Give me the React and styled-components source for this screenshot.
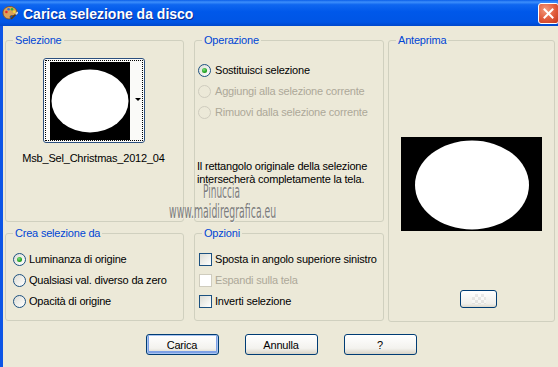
import React from "react";
import styled, { createGlobalStyle } from "styled-components";

const GlobalStyle = createGlobalStyle`
  html, body {
    margin: 0;
    padding: 0;
    background: #ece9d8;
  }
  body {
    width: 558px;
    height: 367px;
    overflow: hidden;
    font-family: "Liberation Sans", Arial, sans-serif;
    font-size: 11px;
    letter-spacing: -0.2px;
    color: #000;
  }
`;

function PaletteIcon() {
  return (
    <svg width="16" height="16" viewBox="0 0 16 16">
      <path d="M8 1.5C3.8 1.5 1 4.3 1 7.8c0 3.4 2.7 6.2 6 6.2 1.3 0 1.6-.8 1.2-1.6-.4-.9.2-1.8 1.2-1.8h1.6c2.2 0 3.9-1.5 3.9-3.6C14.9 4 11.9 1.5 8 1.5z" fill="#d9a25b" stroke="#7a4b1c" strokeWidth="0.8" />
      <circle cx="4.4" cy="7" r="1.3" fill="#e52b2b" />
      <circle cx="6.6" cy="4.2" r="1.3" fill="#2b6ee5" />
      <circle cx="10" cy="4.2" r="1.3" fill="#2fb32f" />
      <circle cx="12.2" cy="6.8" r="1.2" fill="#f5e03a" />
      <path d="M9.5 13.5 L14.8 8.2" stroke="#5a3a16" strokeWidth="1.6" strokeLinecap="round" />
      <path d="M14.2 8.8 L15.4 7.6" stroke="#dcdcdc" strokeWidth="1.8" strokeLinecap="round" />
    </svg>
  );
}

function ThumbImage() {
  return (
    <svg width="80" height="78" viewBox="0 0 80 78">
      <rect width="80" height="78" fill="#000" />
      <ellipse cx="40" cy="39" rx="38.5" ry="31.5" fill="#fff" />
    </svg>
  );
}

function PreviewImage() {
  return (
    <svg width="141" height="94" viewBox="0 0 141 94">
      <rect width="141" height="94" fill="#000" />
      <ellipse cx="71" cy="48" rx="57" ry="44.5" fill="#fff" />
    </svg>
  );
}

export default function App() {
  return (
    <Window>
      <GlobalStyle />
      <TitleBar>
        <PaletteIcon />
        <Title>Carica selezione da disco</Title>
        <CloseButton>
          <svg width="11" height="11" viewBox="0 0 11 11">
            <path d="M1.5 1.5 L9.5 9.5 M9.5 1.5 L1.5 9.5" stroke="#fff" strokeWidth="2" strokeLinecap="square" />
          </svg>
        </CloseButton>
      </TitleBar>

      <Body>
        <Panels>
          <LeftGrid>
            <Group>
              <Legend>Selezione</Legend>
              <SelectionContent>
                <Thumb>
                  <FocusRing>
                    <ThumbImage />
                    <DropArea>
                      <DropArrow />
                    </DropArea>
                  </FocusRing>
                </Thumb>
                <FileName>Msb_Sel_Christmas_2012_04</FileName>
              </SelectionContent>
            </Group>

            <Group>
              <Legend>Operazione</Legend>
              <OptionList $pad="17px 0 0 3px">
                <Option>
                  <Radio $checked />
                  <span>Sostituisci selezione</span>
                </Option>
                <Option $disabled>
                  <Radio $disabled />
                  <span>Aggiungi alla selezione corrente</span>
                </Option>
                <Option $disabled>
                  <Radio $disabled />
                  <span>Rimuovi dalla selezione corrente</span>
                </Option>
              </OptionList>
              <Note>
                Il rettangolo originale della selezione
                <br />
                intersecherà completamente la tela.
              </Note>
            </Group>

            <Group>
              <Legend>Crea selezione da</Legend>
              <OptionList $pad="13px 0 0 7px">
                <Option $gap="3px">
                  <Radio $checked />
                  <span>Luminanza di origine</span>
                </Option>
                <Option $gap="3px">
                  <Radio />
                  <span>Qualsiasi val. diverso da zero</span>
                </Option>
                <Option $gap="3px">
                  <Radio />
                  <span>Opacità di origine</span>
                </Option>
              </OptionList>
            </Group>

            <Group>
              <Legend>Opzioni</Legend>
              <OptionList $pad="13px 0 0 4px">
                <Option $gap="3px">
                  <Check />
                  <span>Sposta in angolo superiore sinistro</span>
                </Option>
                <Option $gap="3px" $disabled>
                  <Check $disabled />
                  <span>Espandi sulla tela</span>
                </Option>
                <Option $gap="3px">
                  <Check />
                  <span>Inverti selezione</span>
                </Option>
              </OptionList>
            </Group>
          </LeftGrid>

          <PreviewGroup>
            <Legend>Anteprima</Legend>
            <PreviewContent>
              <PreviewImage />
              <SmallButton>
                <Checker />
              </SmallButton>
            </PreviewContent>
          </PreviewGroup>
        </Panels>

        <ButtonRow>
          <Button $default>Carica</Button>
          <Button>Annulla</Button>
          <Button>?</Button>
        </ButtonRow>

        <Watermark $x="200px" $y="155px" $size="20px" $scale={0.5}>
          Pinuccia
        </Watermark>
        <Watermark $x="166px" $y="175px" $size="20px" $scale={0.52}>
          www.maidiregrafica.eu
        </Watermark>
      </Body>
    </Window>
  );
}

const Window = styled.div`
  width: 558px;
  height: 367px;
  display: flex;
  flex-direction: column;
  overflow: hidden;
`;

const TitleBar = styled.div`
  height: 26px;
  flex: none;
  display: flex;
  align-items: center;
  gap: 5px;
  padding-left: 2px;
  background: linear-gradient(
    #0a5ee8 0%,
    #3d8ffb 8%,
    #0f67f0 18%,
    #0058ea 45%,
    #0055e5 85%,
    #0048cc 100%
  );
  overflow: hidden;
`;

const Title = styled.span`
  color: #fff;
  font-family: "Liberation Sans", Arial, sans-serif;
  font-size: 14px;
  font-weight: bold;
  letter-spacing: 0;
  text-shadow: 1px 1px #0b2a8f;
  margin-top: 1px;
`;

const CloseButton = styled.div`
  margin-left: auto;
  margin-right: -1px;
  width: 21px;
  height: 21px;
  box-sizing: border-box;
  border: 1px solid #fff;
  border-radius: 3px;
  background: radial-gradient(circle at 35% 30%, #f39a7c, #e0593a 55%, #c2381d);
  display: flex;
  align-items: center;
  justify-content: center;
`;

const Body = styled.div`
  position: relative;
  flex: 1;
  background: #ece9d8;
  border-left: 3px solid #0d55e6;
  padding: 8px 0 0 2px;
  display: flex;
  flex-direction: column;
`;

const Panels = styled.div`
  display: flex;
  gap: 4px;
`;

const LeftGrid = styled.div`
  display: grid;
  grid-template-columns: 179px 190px;
  grid-template-rows: 188px 94px;
  column-gap: 10px;
  row-gap: 5px;
`;

const Group = styled.fieldset`
  margin: 0;
  padding: 0;
  min-width: 0;
  box-sizing: border-box;
  border: 1px solid #d0d0bf;
  border-radius: 3px;
`;

const PreviewGroup = styled(Group)`
  width: 167px;
  height: 288px;
`;

const Legend = styled.legend`
  margin-left: 7px;
  padding: 0 2px;
  color: #0046d5;
  font-size: 11px;
  line-height: 13px;
`;

const SelectionContent = styled.div`
  display: flex;
  flex-direction: column;
  align-items: center;
  padding: 11px 2px 0 0;
`;

const Thumb = styled.div`
  width: 102px;
  height: 85px;
  box-sizing: border-box;
  border: 1px solid #2b4f7e;
  border-radius: 3px;
  padding: 1px;
  background: #fafaf8;
`;

const FocusRing = styled.div`
  height: 100%;
  box-sizing: border-box;
  border: 1px dotted #000;
  display: flex;
  align-items: center;
  padding-left: 4px;
`;

const DropArea = styled.div`
  flex: 1;
  align-self: stretch;
  display: flex;
  align-items: center;
  justify-content: flex-end;
  padding-right: 1px;
  padding-bottom: 2px;
`;

const DropArrow = styled.span`
  width: 0;
  height: 0;
  border-left: 3px solid transparent;
  border-right: 3px solid transparent;
  border-top: 3px solid #000;
`;

const FileName = styled.div`
  margin-top: 9px;
  line-height: 13px;
`;

const OptionList = styled.div`
  display: flex;
  flex-direction: column;
  gap: 8px;
  padding: ${(p) => p.$pad};
`;

const Option = styled.div`
  display: flex;
  align-items: center;
  gap: ${(p) => p.$gap || "4px"};
  height: 13px;
  line-height: 13px;
  color: ${(p) => (p.$disabled ? "#aca899" : "#000")};
  white-space: nowrap;
`;

const Radio = styled.span`
  position: relative;
  flex: none;
  width: 13px;
  height: 13px;
  box-sizing: border-box;
  border-radius: 50%;
  border: 1px solid ${(p) => (p.$disabled ? "#cfccbe" : "#1c5180")};
  background: ${(p) =>
    p.$disabled
      ? "#ece9d8"
      : "linear-gradient(135deg, #dcdcd5 0%, #f2f2ee 60%, #ffffff 100%)"};
  &::after {
    content: "";
    display: ${(p) => (p.$checked ? "block" : "none")};
    position: absolute;
    left: 3px;
    top: 3px;
    width: 5px;
    height: 5px;
    border-radius: 50%;
    background: radial-gradient(circle at 40% 35%, #7ee07e, #21a121 60%, #0f7a0f);
  }
`;

const Check = styled.span`
  flex: none;
  width: 13px;
  height: 13px;
  box-sizing: border-box;
  border: 1px solid ${(p) => (p.$disabled ? "#cfccbe" : "#1c5180")};
  background: ${(p) =>
    p.$disabled
      ? "#ffffff"
      : "linear-gradient(135deg, #dcdcd5 0%, #f2f2ee 60%, #ffffff 100%)"};
`;

const Note = styled.div`
  margin-top: 41px;
  padding-left: 2px;
  line-height: 13px;
`;

const PreviewContent = styled.div`
  display: flex;
  flex-direction: column;
  align-items: center;
  padding-top: 90px;
`;

const SmallButton = styled.div`
  margin-top: 59px;
  margin-left: 14px;
  width: 37px;
  height: 18px;
  box-sizing: border-box;
  border: 1px solid #003c74;
  border-radius: 3px;
  background: linear-gradient(#ffffff, #f0efea 80%, #dcd8cc);
  display: flex;
  align-items: center;
  justify-content: center;
`;

const Checker = styled.span`
  width: 14px;
  height: 10px;
  opacity: 0.35;
  background-image: conic-gradient(#c8c8c8 25%, #fff 0 50%, #c8c8c8 0 75%, #fff 0);
  background-size: 6px 6px;
`;

const ButtonRow = styled.div`
  display: flex;
  justify-content: center;
  gap: 26px;
  margin-top: 12px;
  padding-right: 1px;
`;

const Button = styled.div`
  width: 73px;
  height: 21px;
  box-sizing: border-box;
  border: 1px solid #003c74;
  border-radius: 3px;
  background: linear-gradient(#ffffff, #f3f2ee 70%, #d8d3c6);
  box-shadow: ${(p) =>
    p.$default
      ? "inset 0 0 0 1px #a9c4f0, inset 0 -1px 0 2px #7ea1e5"
      : "none"};
  display: flex;
  align-items: center;
  justify-content: center;
  font-size: 11px;
`;

const Watermark = styled.div`
  position: absolute;
  left: ${(p) => p.$x};
  top: ${(p) => p.$y};
  font-family: "DejaVu Sans Condensed", "DejaVu Sans", sans-serif;
  font-size: ${(p) => p.$size};
  letter-spacing: 0;
  line-height: 1;
  color: #7c7c7a;
  text-shadow: 1px 1px 0 #f4f3ee;
  transform: scaleX(${(p) => p.$scale});
  transform-origin: left top;
  white-space: nowrap;
  pointer-events: none;
`;
